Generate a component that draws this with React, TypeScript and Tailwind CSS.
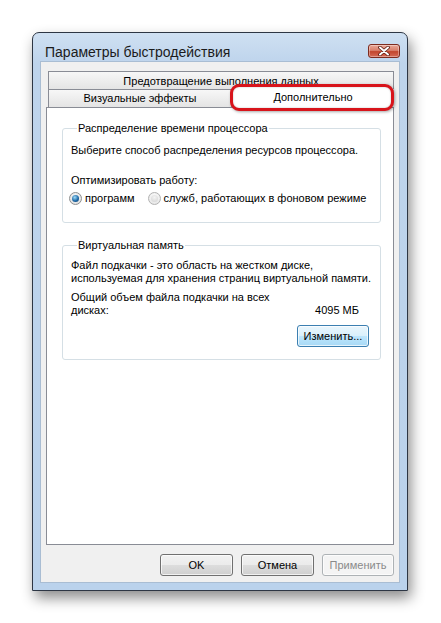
import type { ReactNode } from "react";

const font = "font-['Liberation_Sans',Arial,sans-serif]";

const Radio = ({ checked }: { checked?: boolean }) => {
  if (checked) {
    return (
      <span className="flex w-[13px] h-[13px] shrink-0 items-center justify-center rounded-full border border-[#8e8f8f] bg-[radial-gradient(circle_at_50%_40%,#ffffff,#d5d5d5)]">
        <span className="w-[7px] h-[7px] rounded-full bg-[radial-gradient(circle_at_40%_35%,#9fdcf8,#1f6aa8_55%,#0b3a66)]" />
      </span>
    );
  }
  return (
    <span className="flex w-[13px] h-[13px] shrink-0 items-center justify-center rounded-full border border-[#b2b2b2] bg-[radial-gradient(circle_at_50%_35%,#ffffff,#e0e0e0)]">
      <span className="w-[7px] h-[7px] rounded-full bg-[radial-gradient(circle_at_50%_35%,#f4f4f4,#d2d2d2)]" />
    </span>
  );
};

type BtnKind = "normal" | "focus" | "disabled";

const WinButton = ({ children, kind = "normal", w }: { children: ReactNode; kind?: BtnKind; w: string }) => {
  const look =
    kind === "focus"
      ? "border-[#3c7fb1] bg-[linear-gradient(#eaf6fd_0%,#d9f0fc_50%,#bee6fd_50%,#a7d9f5_100%)] text-black"
      : kind === "disabled"
        ? "border-[#adb2b5] bg-[#f4f4f4] text-[#8a8a8a]"
        : "border-[#707070] bg-[linear-gradient(#f2f2f2_0%,#ebebeb_50%,#dddddd_50%,#cfcfcf_100%)] text-black";
  return (
    <div
      className={`${w} flex h-[22px] items-center justify-center whitespace-nowrap rounded-[3px] border text-[11px] leading-[15px] shadow-[inset_0_0_0_1px_rgba(255,255,255,0.7)] ${look}`}
    >
      {children}
    </div>
  );
};

const CloseButton = () => (
  <div className="mt-[11px] flex h-[14px] w-[32px] items-center justify-center rounded-[3px] border border-[#7d2b1f] bg-[linear-gradient(#eaa898_0%,#d9806d_45%,#c2452d_55%,#d56b57_100%)] shadow-[inset_0_0_0_1px_rgba(255,255,255,0.35)]">
    <svg width="12" height="10" viewBox="0 0 12 10">
      <path d="M2 1.5 L10 8.5 M10 1.5 L2 8.5" stroke="#5a1a12" strokeWidth="3.6" strokeLinecap="round" />
      <path d="M2 1.5 L10 8.5 M10 1.5 L2 8.5" stroke="#ffffff" strokeWidth="2" strokeLinecap="round" />
    </svg>
  </div>
);

export default function App() {
  return (
    <div className={`min-h-screen bg-white pl-[32px] pt-[32px] text-black ${font}`}>
      <div className="flex h-[559px] w-[376px] flex-col rounded-t-[7px] border border-[#2d3644] bg-[linear-gradient(#cfe0f2_0px,#bed4ec_30px,#bad2ec_100%)] shadow-[3px_7px_14px_rgba(0,0,0,0.45)]">
        {/* title bar */}
        <div className="flex h-[28px] shrink-0 items-start justify-between pl-[12px] pr-[7px]">
          <span className="mt-[10px] whitespace-nowrap text-[14px] leading-[18px] text-[#1b1b1b]">Параметры быстродействия</span>
          <CloseButton />
        </div>

        {/* client area */}
        <div className="mx-[7px] mb-[7px] flex flex-1 flex-col border border-[#a9bdd3] bg-[#f0f0f0] px-[5px] pb-[6px] pt-[9px]">
          {/* tabs */}
          <div className="ml-[2px] flex flex-col whitespace-nowrap text-[11px] leading-[15px]">
            <div className="flex h-[18px] items-center justify-center border-x border-t border-[#898c95] bg-[linear-gradient(#f7f7f7,#e4e4e4)] pt-[1px]">
              Предотвращение выполнения данных
            </div>
            <div className="flex h-[18px]">
              <div className="flex w-[184px] items-center justify-center border-x border-t border-[#898c95] bg-[linear-gradient(#f7f7f7,#e4e4e4)]">
                Визуальные эффекты
              </div>
              <div className="relative flex flex-1 items-center justify-center">
                <div className="absolute -left-[2px] -top-[5px] z-10 h-[27px] w-[164px] rounded-[9px] border-[3px] border-[#d8141b] bg-white shadow-[1px_1px_3px_rgba(0,0,0,0.35),inset_0_0_2px_rgba(0,0,0,0.25)]" />
                <span className="relative z-20 -mt-[2px]">Дополнительно</span>
              </div>
            </div>
          </div>

          {/* panel */}
          <div className="flex h-[438px] flex-col whitespace-nowrap border border-[#898c95] bg-white text-[11px] leading-[15px]">
            <fieldset className="ml-[15px] mt-[13px] w-[319px] min-w-0 rounded-[3px] border border-[#d5dfe5] px-[8px] pb-[16px]">
              <legend className="ml-[6px] px-[1px]">Распределение времени процессора</legend>
              <div className="mt-[7px]">Выберите способ распределения ресурсов процессора.</div>
              <div className="mt-[15px]">Оптимизировать работу:</div>
              <div className="-ml-[2px] mt-[3px] flex items-center">
                <Radio checked />
                <span className="ml-[3px]">программ</span>
                <span className="ml-[13px]">
                  <Radio />
                </span>
                <span className="ml-[3px]">служб, работающих в фоновом режиме</span>
              </div>
            </fieldset>

            <fieldset className="ml-[15px] mt-[15px] w-[319px] min-w-0 rounded-[3px] border border-[#d5dfe5] pb-[12px] pl-[8px] pr-[11px]">
              <legend className="ml-[6px] px-[1px]">Виртуальная память</legend>
              <div className="mt-[6px] leading-[13px]">
                Файл подкачки - это область на жестком диске,
                <br />
                используемая для хранения страниц виртуальной памяти.
              </div>
              <div className="mt-[6px] flex items-end leading-[13px]">
                <div>
                  Общий объем файла подкачки на всех
                  <br />
                  дисках:
                </div>
                <div className="ml-auto mr-[10px]">4095 МБ</div>
              </div>
              <div className="mt-[8px] flex justify-end">
                <WinButton kind="focus" w="w-[72px]">
                  Изменить...
                </WinButton>
              </div>
            </fieldset>
          </div>

          {/* dialog buttons */}
          <div className="mt-[9px] flex justify-end gap-[8px]">
            <WinButton w="w-[73px]">OK</WinButton>
            <WinButton w="w-[73px]">Отмена</WinButton>
            <WinButton kind="disabled" w="w-[72px]">
              Применить
            </WinButton>
          </div>
        </div>
      </div>
    </div>
  );
}
